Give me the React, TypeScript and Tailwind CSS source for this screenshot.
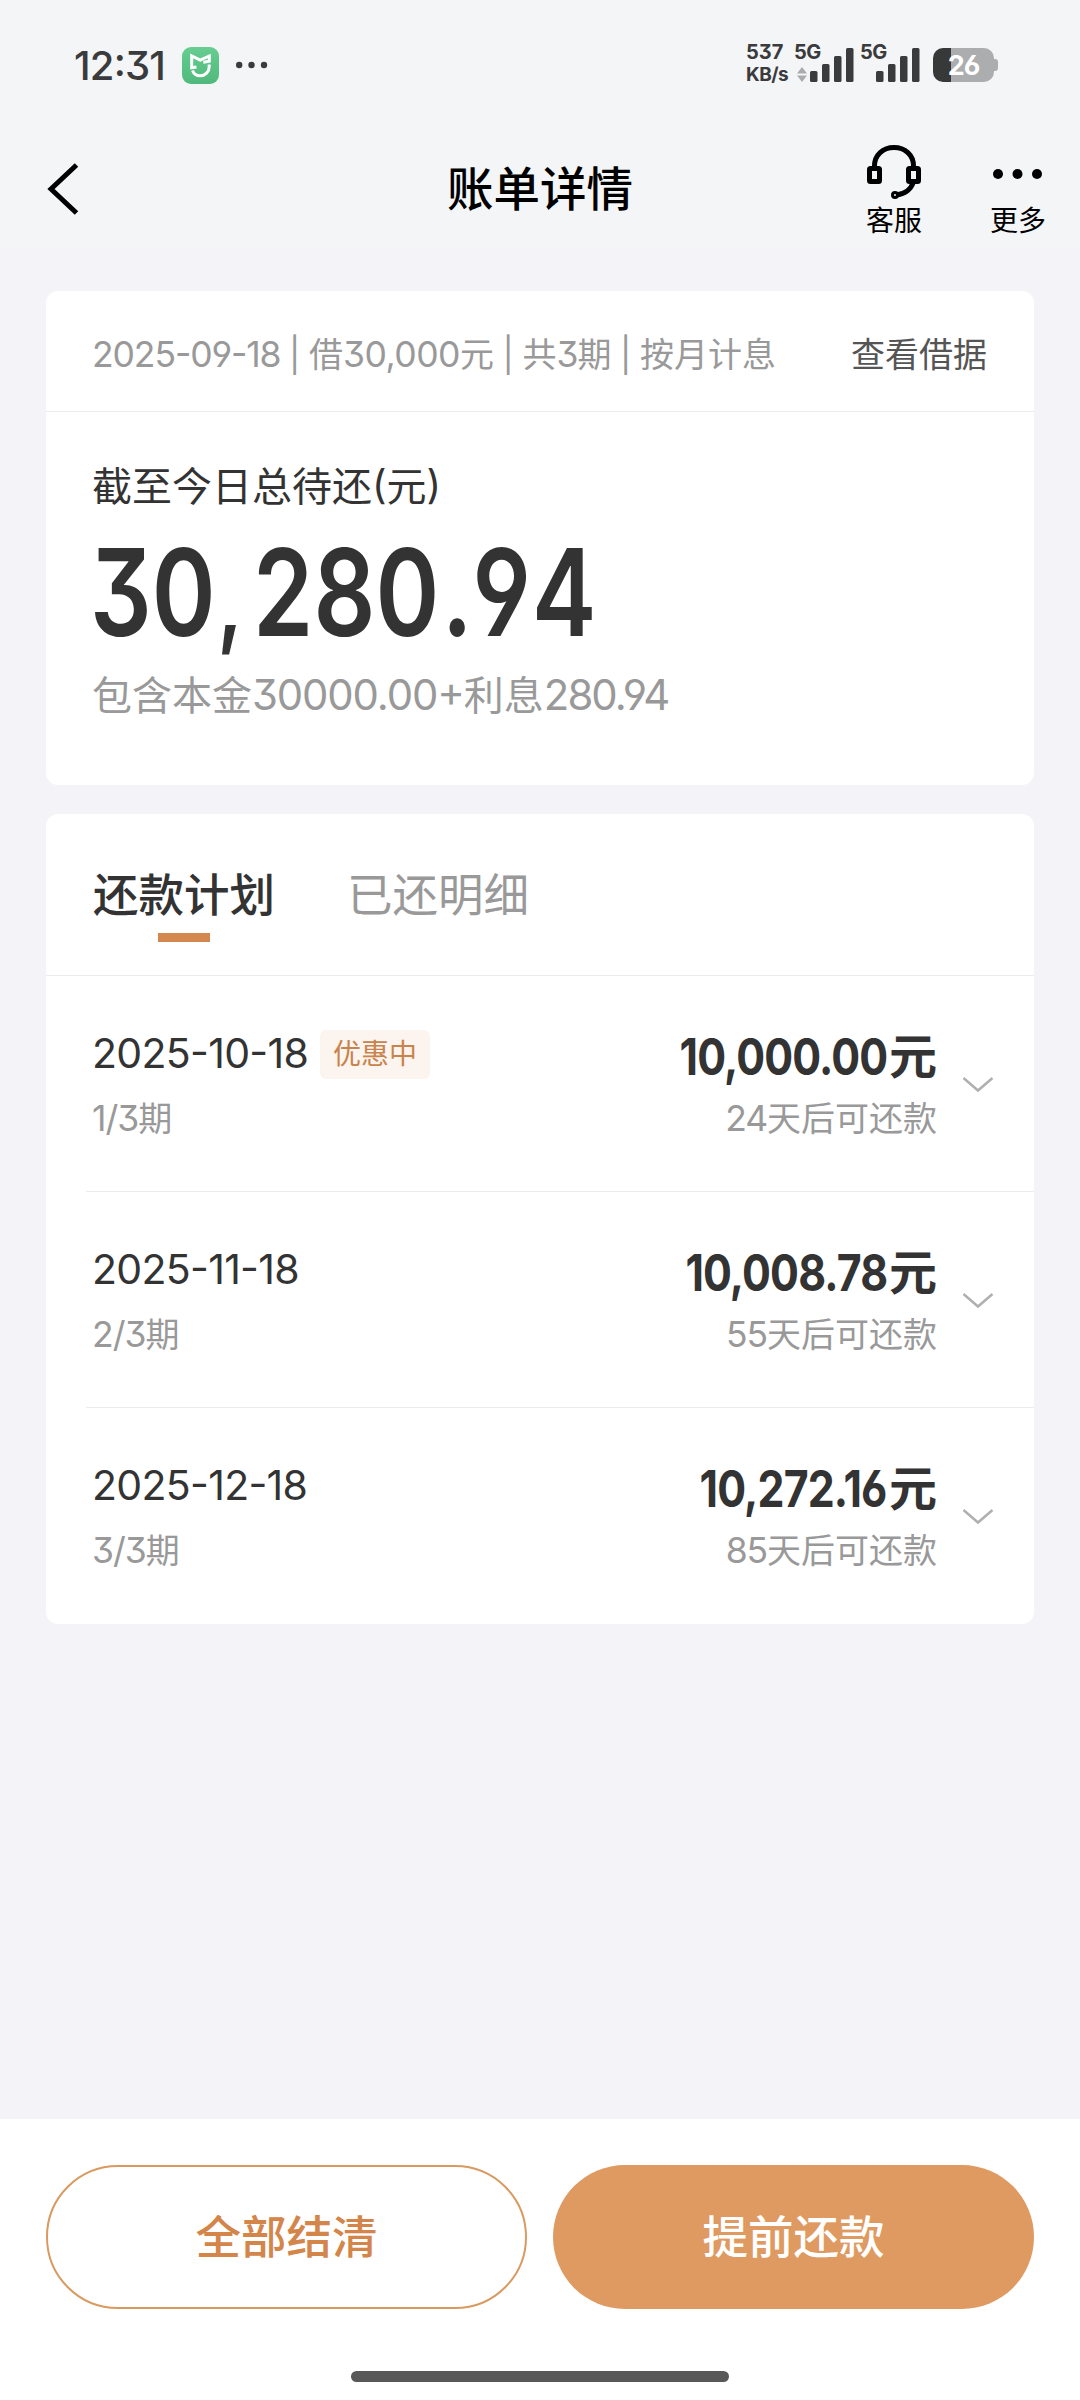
import React from 'react';

const plan = [
  { date: '2025-10-18', term: '1/3', amount: '10,000.00', days: '24', tag: '优惠中' },
  { date: '2025-11-18', term: '2/3', amount: '10,008.78', days: '55' },
  { date: '2025-12-18', term: '3/3', amount: '10,272.16', days: '85' },
];

function Num({ children, track = 'tracking-[-1px]' }: { children: React.ReactNode; track?: string }) {
  return <span className={`text-[1.045em] ${track}`}>{children}</span>;
}

function Signal() {
  return (
    <svg width="44" height="34" viewBox="0 0 44 34" fill="#3a3b3c">
      <rect x="0" y="23" width="7.5" height="11" rx="1.5" />
      <rect x="12" y="16" width="7.5" height="18" rx="1.5" />
      <rect x="24" y="8" width="7.5" height="26" rx="1.5" />
      <rect x="36" y="0" width="7.5" height="34" rx="1.5" />
    </svg>
  );
}

function StatusBar() {
  return (
    <div className="flex h-[128px] items-start pl-[74px] text-[#3a3b3c]">
      <span className="mt-[45px] w-[108px] text-[40px] font-medium leading-[42px] tracking-[-0.8px]">12:31</span>
      <svg className="mt-[47px]" width="37" height="37" viewBox="0 0 37 37">
        <defs>
          <linearGradient id="mi" x1="0" y1="0" x2="0" y2="1">
            <stop offset="0" stopColor="#67cd92" />
            <stop offset="1" stopColor="#50b97b" />
          </linearGradient>
        </defs>
        <rect width="37" height="37" rx="9" fill="url(#mi)" />
        <g fill="none" stroke="#fff" strokeWidth="3">
          <path d="M14.500 20L9.700 20.800V9l8.500 4.200L27.300 9v5.200l-6 1" />
          <path d="M10.500 23.500c1.200 3.200 4 5.300 7.700 5.300 5 0 9-4 9-9v-2.300" />
        </g>
      </svg>
      <svg className="ml-[17px] mt-[61px]" width="32" height="8" viewBox="0 0 32 8" fill="#3a3b3c">
        <circle cx="3.200" cy="4" r="3.200" />
        <circle cx="15.500" cy="4" r="3.200" />
        <circle cx="28" cy="4" r="3.200" />
      </svg>
      <div className="ml-[478px] mt-[42px] w-[49px] text-[20px] font-bold">
        <div className="leading-[20px]">537</div>
        <div className="mt-[3px] text-[19px] leading-[20px] tracking-[-0.5px]">KB/s</div>
      </div>
      <div className="mt-[42px] w-[15px]">
        <div className="ml-[-1px] w-[30px] text-[20px] font-bold leading-[20px] tracking-[-0.5px]">5G</div>
        <svg className="ml-[2px] mt-[5px]" width="10" height="15" viewBox="0 0 10 15" fill="#aaabac">
          <path d="M5 0l5 6.500H0zM5 15l5-6.500H0z" />
        </svg>
      </div>
      <div className="mt-[48px] w-[50px]"><Signal /></div>
      <div className="mt-[42px] w-[16px] text-[20px] font-bold leading-[20px] tracking-[-0.5px]">5G</div>
      <div className="mt-[48px] w-[57px]"><Signal /></div>
      <div className="mt-[48px] flex items-center">
        <div className="flex h-[34px] w-[61px] items-center justify-center rounded-[10px] bg-[linear-gradient(90deg,#373838_18px,#acadae_18px)] text-[27px] font-bold leading-[34px] tracking-[-1px] text-white">
          <span className="mt-[2px]">26</span>
        </div>
        <div className="h-[12px] w-[4px] rounded-r-[3px] bg-[#acadae]" />
      </div>
    </div>
  );
}

function NavBar() {
  return (
    <div className="relative flex h-[120px] justify-between pl-[45px] pr-[34px] text-black">
      <svg className="mt-[34px]" width="36" height="54" viewBox="0 0 36 54" fill="none" stroke="#000" strokeWidth="5">
        <path d="M31.500 3L6 27l25.500 24" />
      </svg>
      <div className="absolute inset-x-0 top-[31px] text-center text-[46.500px] font-medium leading-[60px]">账单详情</div>
      <div className="flex gap-[68px]">
        <div className="flex w-[56px] flex-col items-center">
          <svg className="mt-[17px]" width="54" height="54" viewBox="0 0 54 54" fill="none" stroke="#000" strokeWidth="5">
            <path d="M7.500 22v-1C7.500 10 16 2.500 27 2.500S46.500 10 46.500 21v1" />
            <rect x="2.500" y="23.500" width="10" height="13" rx="1" />
            <rect x="41.500" y="23.500" width="10" height="13" rx="1" />
            <path d="M46 38c-2 6-8 11-17 12" />
            <circle cx="28" cy="50" r="1.500" />
          </svg>
          <span className="mt-[6px] whitespace-nowrap text-[28px] leading-[32px]">客服</span>
        </div>
        <div className="flex w-[56px] flex-col items-center">
          <svg className="mt-[41px]" width="50" height="10" viewBox="0 0 50 10" fill="#000">
            <circle cx="5" cy="5" r="5" />
            <circle cx="24.500" cy="5" r="5" />
            <circle cx="44" cy="5" r="5" />
          </svg>
          <span className="mt-[26px] whitespace-nowrap text-[28px] leading-[32px]">更多</span>
        </div>
      </div>
    </div>
  );
}

function Summary() {
  return (
    <section className="h-[494px] rounded-[12px] bg-white">
      <div className="flex h-[121px] items-center justify-between border-b border-[#ebebeb] pl-[46px] pr-[47px] pt-[7px] text-[34px] leading-[48px]">
        <span className="whitespace-nowrap text-[#999] [word-spacing:-1px]">
          <Num track="tracking-[-1.100px]">2025-09-18</Num> | 借<Num track="tracking-[-0.500px]">30,000</Num>元 | 共<Num>3</Num>期 | 按月计息
        </span>
        <span className="text-[#555]">查看借据</span>
      </div>
      <div className="px-[46px] pt-[47px]">
        <div className="w-fit whitespace-nowrap text-[40px] leading-[56px] text-[#333]">截至今日总待还(元)</div>
        <div className="mt-[29px] flex h-[104px] items-center">
          <span className="ml-[-2px] inline-block origin-left scale-x-[0.800] whitespace-nowrap text-[121px] font-semibold leading-[104px] text-[#333]">
            30<span className="ml-[2px] mr-[13px] text-[100px]">,</span>280<span className="ml-[3px]">.</span><span className="tracking-[6px]">94</span>
          </span>
        </div>
        <div className="mt-[19px] w-fit whitespace-nowrap text-[40px] leading-[56px] text-[#999]">
          包含本金<Num track="tracking-[-1.100px]">30000.00+</Num>利息<Num track="tracking-[-1.900px]">280.94</Num>
        </div>
      </div>
    </section>
  );
}

function Row({ item, last }: { item: (typeof plan)[number]; last: boolean }) {
  return (
    <div className={last ? 'ml-[40px] flex h-[216px]' : 'ml-[40px] flex h-[216px] border-b border-[#ebebeb]'}>
      <div className="flex-1 pl-[6px]">
        <div className="mt-[52px] flex h-[50px] items-center">
          <span className="text-[41px] leading-[50px] tracking-[-0.700px] text-[#333]">{item.date}</span>
          {item.tag && (
            <span className="ml-[12px] mt-[2px] flex h-[49px] w-[110px] items-center justify-center rounded-[6px] bg-[#fcf4ee] text-[28px] leading-[48px] text-[#c9834c]">
              {item.tag}
            </span>
          )}
        </div>
        <div className="mt-[18px] w-fit text-[34px] leading-[46px] text-[#999]"><Num track="tracking-[-1px]">{item.term}</Num>期</div>
      </div>
      <div className="flex flex-col items-end">
        <div className="mt-[56px] flex h-[50px] items-center whitespace-nowrap text-[48px] font-bold leading-[50px] text-[#333]">
          <span className="mr-[2px] inline-block origin-right scale-x-[0.840] text-[51px] tracking-[-1px]">{item.amount}</span>
          <span>元</span>
        </div>
        <div className="mt-[14px] whitespace-nowrap text-[34px] leading-[46px] text-[#999]"><Num track="tracking-[-1.100px]">{item.days}</Num>天后可还款</div>
      </div>
      <svg className="ml-[25px] mr-[40px] mt-[100px]" width="32" height="18" viewBox="0 0 32 18" fill="none" stroke="#b0b0b0" strokeWidth="2.500">
        <path d="M1.500 2L16 14.500 30.500 2" />
      </svg>
    </div>
  );
}

export default function App() {
  return (
    <div className="flex h-[2400px] w-[1080px] flex-col overflow-hidden bg-[#f3f3f8] font-['Inter','Noto_Sans_CJK_SC',sans-serif] [font-feature-settings:'cv03','cv04','cv09','case']">
      <header className="h-[248px] bg-[#f4f5f7]">
        <StatusBar />
        <NavBar />
      </header>
      <main className="flex flex-1 flex-col gap-[29px] px-[46px] pt-[43px]">
        <Summary />
        <section className="rounded-[12px] bg-white">
          <div className="flex h-[162px] gap-[72px] border-b border-[#ebebeb] pl-[47px] pt-[52px] text-[45.500px] leading-[60px]">
            <div className="flex flex-col items-center">
              <span className="font-medium text-[#333]">还款计划</span>
              <span className="mt-[7px] h-[9px] w-[52px] bg-[#d4874f]" />
            </div>
            <span className="text-[#999]">已还明细</span>
          </div>
          {plan.map((p, i) => (
            <Row key={p.date} item={p} last={i === plan.length - 1} />
          ))}
        </section>
      </main>
      <footer className="h-[281px] bg-white px-[46px] pt-[46px]">
        <div className="grid grid-cols-2 gap-[26px] text-[45.500px] font-medium leading-[60px]">
          <button className="h-[144px] rounded-full border-2 border-[#d99a60] pt-[2px] text-[#d4854a]">全部结清</button>
          <button className="h-[144px] rounded-full bg-[#de9a60] pt-[2px] text-white">提前还款</button>
        </div>
        <div className="mx-auto mt-[62px] h-[11px] w-[378px] rounded-full bg-[#585858]" />
      </footer>
    </div>
  );
}
